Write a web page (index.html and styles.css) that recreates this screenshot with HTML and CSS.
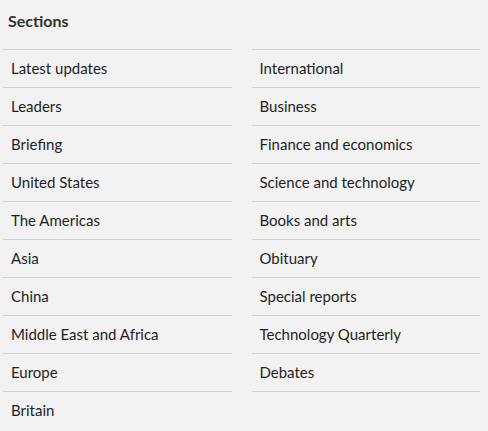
FILE: index.html
```html
<!DOCTYPE html>
<html>

<head>
  <title>Sections</title>
  <link rel="stylesheet" href="styles.css">
</head>

<body>
  <div class="sections">
    <h3 class="title">Sections</h3>
    <div class="columns">
      <ul class="list">
        <li><a href="#">Latest updates</a></li>
        <li><a href="#">Leaders</a></li>
        <li><a href="#">Briefing</a></li>
        <li><a href="#">United States</a></li>
        <li><a href="#">The Americas</a></li>
        <li><a href="#">Asia</a></li>
        <li><a href="#">China</a></li>
        <li><a href="#">Middle East and Africa</a></li>
        <li><a href="#">Europe</a></li>
        <li><a href="#">Britain</a></li>
      </ul>
      <ul class="list closed">
        <li><a href="#">International</a></li>
        <li><a href="#">Business</a></li>
        <li><a href="#">Finance and economics</a></li>
        <li><a href="#">Science and technology</a></li>
        <li><a href="#">Books and arts</a></li>
        <li><a href="#">Obituary</a></li>
        <li><a href="#">Special reports</a></li>
        <li><a href="#">Technology Quarterly</a></li>
        <li><a href="#">Debates</a></li>
      </ul>
    </div>
  </div>
</body>

</html>
```

FILE: styles.css
```css
body {
  margin: 0;
  background-color: #f2f2f2;
  font-family: Lato, "Noto Sans", sans-serif;
  color: #1f1f1f;
}
.sections {
  padding: 8px 8px 0 8px;
}
.title {
  margin: 0;
  padding-top: 3px;
  height: 38px;
  font-size: 16px;
  font-weight: bold;
  color: #333333;
}
.columns {
  display: grid;
  grid-template-columns: 1fr 1fr;
  column-gap: 20px;
  margin-left: -5px;
}
.list {
  list-style: none;
  margin: 0;
  padding: 0;
}
.list li {
  border-top: 1px solid #d3d3d3;
}
.closed li:last-child {
  border-bottom: 1px solid #d3d3d3;
}
.list a {
  display: block;
  height: 36px;
  line-height: 36px;
  padding: 0 0 1px 8px;
  font-size: 15px;
  color: #1f1f1f;
  text-decoration: none;
}
```
